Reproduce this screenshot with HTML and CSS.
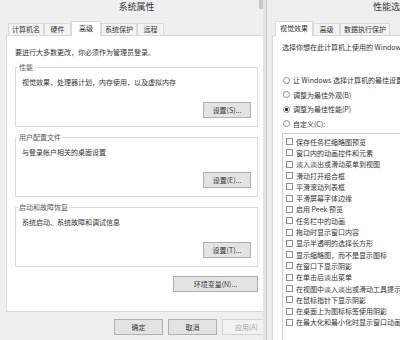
FILE: index.html
```html
<!DOCTYPE html>
<html>
<head>
    <meta charset="utf-8">
    <link rel="stylesheet" href="styles.css">
</head>
<body>
    <div class="desktop">
        <div class="win win-system">
            <div class="titlebar">
                <span class="title">系统属性</span>
                <span class="caption-btn"></span>
            </div>

            <div class="tabs">
                <div class="tab">计算机名</div>
                <div class="tab">硬件</div>
                <div class="tab tab-active">高级</div>
                <div class="tab">系统保护</div>
                <div class="tab">远程</div>
            </div>

            <div class="panel">
                <p class="note">要进行大多数更改，你必须作为管理员登录。</p>

                <fieldset class="group">
                    <legend>性能</legend>
                    <p>视觉效果，处理器计划，内存使用，以及虚拟内存</p>
                    <div class="group-actions">
                        <button class="btn">设置(S)...</button>
                    </div>
                </fieldset>

                <fieldset class="group">
                    <legend>用户配置文件</legend>
                    <p>与登录帐户相关的桌面设置</p>
                    <div class="group-actions">
                        <button class="btn">设置(E)...</button>
                    </div>
                </fieldset>

                <fieldset class="group">
                    <legend>启动和故障恢复</legend>
                    <p>系统启动、系统故障和调试信息</p>
                    <div class="group-actions">
                        <button class="btn">设置(T)...</button>
                    </div>
                </fieldset>

                <div class="panel-actions">
                    <button class="btn btn-wide">环境变量(N)...</button>
                </div>
            </div>

            <div class="dialog-actions">
                <button class="btn">确定</button>
                <button class="btn">取消</button>
                <button class="btn" disabled>应用(A)</button>
            </div>
        </div>

        <div class="win win-perf">
            <div class="titlebar titlebar-perf">
                <span class="title">性能选项</span>
            </div>

            <div class="tabs">
                <div class="tab tab-active">视觉效果</div>
                <div class="tab">高级</div>
                <div class="tab">数据执行保护</div>
            </div>

            <div class="panel panel-perf">
                <p class="note">选择你想在此计算机上使用的 Windows 外观和性能设置。</p>

                <div class="radios">
                    <div class="radio-row"><span class="radio"></span>让 Windows 选择计算机的最佳设置(L)</div>
                    <div class="radio-row"><span class="radio"></span>调整为最佳外观(B)</div>
                    <div class="radio-row"><span class="radio radio-on"></span>调整为最佳性能(P)</div>
                    <div class="radio-row"><span class="radio"></span>自定义(C):</div>
                </div>

                <div class="checklist" id="effects"></div>
            </div>
        </div>
    </div>

    <script>
        const effects = [
            '保存任务栏缩略图预览',
            '窗口内的动画控件和元素',
            '淡入淡出或滑动菜单到视图',
            '滑动打开组合框',
            '平滑滚动列表框',
            '平滑屏幕字体边缘',
            '启用 Peek 预览',
            '任务栏中的动画',
            '拖动时显示窗口内容',
            '显示半透明的选择长方形',
            '显示缩略图，而不是显示图标',
            '在窗口下显示阴影',
            '在单击后淡出菜单',
            '在视图中淡入淡出或滑动工具提示',
            '在鼠标指针下显示阴影',
            '在桌面上为图标标签使用阴影',
            '在最大化和最小化时显示窗口动画'
        ];

        document.getElementById('effects').innerHTML = effects.map(name => `
            <div class="check-row"><span class="checkbox"></span>${name}</div>
        `).join('');
    </script>
</body>
</html>
```

FILE: styles.css
```css
body {
    margin: 0;
    width: 400px;
    height: 340px;
    overflow: hidden;
    font-family: "Noto Sans CJK SC", "Noto Sans", sans-serif;
    font-size: 7px;
    color: #333;
    background: #efefef;
}

p {
    margin: 0;
}

.desktop {
    position: relative;
    width: 400px;
    height: 340px;
}

.win {
    box-sizing: border-box;
    height: 340px;
    background: #efefef;
}

.win-system {
    position: relative;
    width: 273px;
}

/* second dialog sits on top of the first one */
.win-perf {
    position: absolute;
    top: 0;
    left: 266px;
    width: 134px;
    display: flex;
    flex-direction: column;
    overflow: hidden;
    border-left: 1px solid #c9c9c9;
    box-shadow: -3px 0 0 #e4e4e4;
}

.titlebar {
    height: 20px;
    flex-shrink: 0;
    line-height: 14px;
    text-align: center;
    white-space: nowrap;
}

.titlebar-perf {
    text-align: left;
    padding-left: 106px;
}

.title {
    font-size: 9px;
    color: #3a3a3a;
}

.caption-btn {
    position: absolute;
    top: 0;
    right: 8px;
    width: 6px;
    height: 9px;
    background: #c8c8c8;
}

/* tab strip */
.tabs {
    display: flex;
    flex-shrink: 0;
    align-items: flex-end;
    height: 15px;
    padding-left: 8px;
    white-space: nowrap;
}

.tab {
    box-sizing: border-box;
    height: 12px;
    min-width: 27px;
    padding: 0 3px;
    line-height: 11px;
    text-align: center;
    background: #f3f3f3;
    border: 1px solid #d9d9d9;
    border-bottom: none;
}

.tab-active {
    position: relative;
    z-index: 1;
    height: 15px;
    min-width: 30px;
    margin-bottom: -1px;
    padding: 0 4px;
    line-height: 13px;
    background: #fff;
}

/* tab page */
.panel {
    margin: 0 6px;
    padding: 11px 8px 19px 8px;
    background: #fff;
    border: 1px solid #d9d9d9;
}

.note {
    line-height: 10px;
    white-space: nowrap;
}

.group {
    margin: 5px 0 0 0;
    padding: 5px 6px 8px 6px;
    border: 1px solid #dcdcdc;
}

.group legend {
    margin-left: -4px;
    padding: 0 1px;
    line-height: 10px;
    color: #5a5a5a;
}

.group p {
    line-height: 10px;
}

.group-actions,
.panel-actions {
    display: flex;
    justify-content: flex-end;
    margin-top: 15px;
}

.panel-actions {
    margin-top: 9px;
}

.btn {
    box-sizing: border-box;
    width: 48px;
    height: 16px;
    padding: 0;
    font: inherit;
    color: #333;
    background: #e3e3e3;
    border: 1px solid #b0b0b0;
}

.btn-wide {
    width: 85px;
}

.btn:disabled {
    color: #a6a6a6;
    background: #f2f2f2;
    border-color: #d2d2d2;
}

.dialog-actions {
    display: flex;
    justify-content: flex-end;
    gap: 5px;
    margin-top: 7px;
    padding-right: 2px;
}

.dialog-actions .btn {
    width: 49px;
}

/* performance options */
.panel-perf {
    flex: 1;
    display: flex;
    flex-direction: column;
    margin: 0 0 0 5px;
    padding: 6px 0 0 9px;
    border-right: none;
    border-bottom: none;
    overflow: hidden;
}

.radios {
    margin-top: 21px;
}

.radio-row {
    display: flex;
    align-items: center;
    height: 14.5px;
    white-space: nowrap;
}

.radio {
    box-sizing: border-box;
    flex-shrink: 0;
    width: 7px;
    height: 7px;
    margin: 0 3px 0 1px;
    border: 1px solid #8c8c8c;
    border-radius: 50%;
    background: #fff;
}

.radio-on {
    background: radial-gradient(circle, #333 0 1.4px, #fff 1.9px);
}

.checklist {
    flex: 1;
    margin-top: 2px;
    padding-top: 2px;
    background: #fff;
    border: 1px solid #cfcfcf;
    border-right: none;
    border-bottom: none;
}

.check-row {
    display: flex;
    align-items: center;
    height: 11.3px;
    white-space: nowrap;
}

.checkbox {
    box-sizing: border-box;
    flex-shrink: 0;
    width: 7px;
    height: 7px;
    margin: 0 3px 0 3px;
    border: 1px solid #8f8f8f;
    background: #fff;
}
```
